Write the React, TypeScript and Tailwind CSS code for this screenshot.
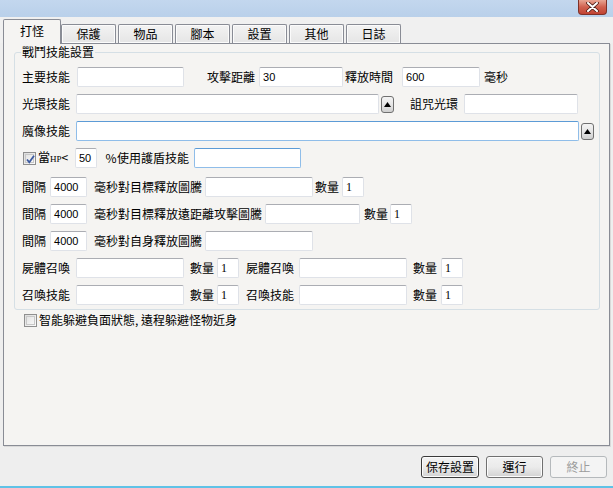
import React from 'react';
import clsx from 'clsx';

interface TextBoxProps {
  className?: string;
  value?: string;
  focus?: boolean;
  serif?: boolean;
}

const TextBox: React.FC<TextBoxProps> = ({ className, value, focus, serif }) => (
  <div
    className={clsx(
      'h-[20px] shrink-0 bg-white border rounded-[2px] flex items-center px-[3px] text-black',
      focus ? 'border-[#8fbde9] border-t-[#5c9bd6]' : 'border-[#dfe2e8] border-t-[#abadb3]',
      serif ? "font-['Liberation_Serif',serif] text-[12px]" : "font-['Liberation_Sans',sans-serif] text-[11px]",
      className
    )}
  >
    {value}
  </div>
);

const Label: React.FC<{ className?: string; children: React.ReactNode }> = ({ className, children }) => (
  <span className={clsx('text-[12px] leading-[20px] whitespace-nowrap shrink-0', className)}>{children}</span>
);

const ArrowButton: React.FC<{ className?: string }> = ({ className }) => (
  <div
    className={clsx(
      'w-[13px] h-[17px] shrink-0 rounded-[3px] border border-[#707070] bg-gradient-to-b from-[#f4f4f4] via-[#e6e6e6] to-[#cfcfcf] flex items-center justify-center',
      className
    )}
  >
    <svg width="7" height="5" viewBox="0 0 7 5">
      <path d="M3.5 0 L7 5 L0 5 Z" fill="#000" />
    </svg>
  </div>
);

const CheckBox: React.FC<{ checked?: boolean; className?: string }> = ({ checked, className }) => (
  <div
    className={clsx(
      'w-[13px] h-[13px] shrink-0 border border-[#8f8f8f] bg-gradient-to-br from-[#dcdcdc] to-[#fbfbfb] p-[1px]',
      className
    )}
  >
    <div className="w-full h-full border border-[#c8c8c8] bg-gradient-to-br from-[#e4e4e4] to-[#f7f7f7] relative">
      {checked && (
        <svg className="absolute -left-[1px] -top-[1px]" width="11" height="11" viewBox="0 0 11 11">
          <path d="M2 5.5 L4.3 8.3 L9 1.8" stroke="#3c5aa0" strokeWidth="1.8" fill="none" />
        </svg>
      )}
    </div>
  </div>
);

const tabs = ['打怪', '保護', '物品', '腳本', '設置', '其他', '日誌'];

export default function App() {
  return (
    <div className="w-[613px] h-[488px] bg-[#eeeeee] flex flex-col overflow-hidden text-black font-['Noto_Sans_CJK_TC','Liberation_Sans',sans-serif]">
      {/* title bar */}
      <div className="h-[17px] shrink-0 bg-gradient-to-b from-[#c3d7ee] to-[#b9d0ea] flex justify-end pr-[6px]">
        <div className="w-[29px] h-[15px] rounded-b-[4px] border border-t-0 border-[#7e3128] bg-gradient-to-b from-[#e7a493] via-[#d0604f] to-[#c14332] flex items-center justify-center">
          <svg width="13" height="10" viewBox="0 0 13 10">
            <path d="M2 1 L11 9 M11 1 L2 9" stroke="#4a1a14" strokeWidth="3.6" strokeLinecap="round" />
            <path d="M2 1 L11 9 M11 1 L2 9" stroke="#ffffff" strokeWidth="2" strokeLinecap="round" />
          </svg>
        </div>
      </div>

      {/* tabs */}
      <div className="h-[26px] shrink-0 flex items-end pl-[3px] bg-[#f0f0f0]">
        {tabs.map((t, i) =>
          i === 0 ? (
            <div
              key={t}
              className="relative z-10 w-[58px] h-[25px] -mb-[1px] border border-b-0 border-[#898c95] rounded-t-[2px] bg-[#f5f4f2] flex items-center justify-center text-[12px] pb-[2px]"
            >
              {t}
            </div>
          ) : (
            <div
              key={t}
              className={clsx(
                'w-[55px] h-[19px] border border-b-0 border-[#898c95] rounded-t-[2px] bg-gradient-to-b from-[#f3f3f3] to-[#e5e5e5] flex items-center justify-center text-[12px] shadow-[inset_0_0_0_1px_#fbfbfb]',
                i > 1 && 'ml-[2px]'
              )}
            >
              {t}
            </div>
          )
        )}
      </div>

      {/* panel */}
      <div className="ml-[3px] w-[607px] h-[403px] shrink-0 border border-[#898c95] bg-[#f5f4f2] shadow-[1px_1px_0_#d9d9d9] flex flex-col">
        <div className="relative ml-[10px] mt-[8px] w-[586px] border border-[#d5dfe5] rounded-[3px] pl-[7px] pt-[14px] pb-[4px] flex flex-col gap-[7px]">
          <span className="absolute left-[6px] -top-[7px] px-[1px] h-[12px] leading-[12px] text-[12px] bg-[#f5f4f2]">
            戰鬥技能設置
          </span>

          <div className="flex items-center h-[20px]">
            <Label>主要技能</Label>
            <TextBox className="ml-[7px] w-[107px]" />
            <Label className="ml-[23px]">攻擊距離</Label>
            <TextBox className="ml-[4px] w-[84px]" value="30" />
            <Label className="ml-[2px]">釋放時間</Label>
            <TextBox className="ml-[9px] w-[78px]" value="600" />
            <Label className="ml-[4px]">毫秒</Label>
          </div>

          <div className="flex items-center h-[20px]">
            <Label>光環技能</Label>
            <TextBox className="ml-[6px] w-[303px]" />
            <ArrowButton className="ml-[2px]" />
            <Label className="ml-[16px]">詛咒光環</Label>
            <TextBox className="ml-[6px] w-[114px]" />
          </div>

          <div className="flex items-center h-[20px]">
            <Label>魔像技能</Label>
            <TextBox className="ml-[6px] w-[503px]" focus />
            <ArrowButton className="ml-[2px]" />
          </div>

          <div className="flex items-center h-[20px]">
            <CheckBox checked className="ml-[1px]" />
            <Label className="ml-[2px] w-[37px]">
              當<span className="text-[9px] font-['Liberation_Serif',serif]">HP</span>&lt;
            </Label>
            <TextBox className="w-[22px]" value="50" />
            <Label className="ml-[8px] w-[12px] text-center">%</Label>
            <Label className="w-[77px]">使用護盾技能</Label>
            <TextBox className="w-[107px]" focus />
          </div>

          <div className="flex items-center h-[20px] mt-[2px]">
            <Label>間隔</Label>
            <TextBox className="ml-[4px] w-[37px]" value="4000" />
            <Label className="ml-[7px]">毫秒對目標釋放圖騰</Label>
            <TextBox className="ml-[3px] w-[108px]" />
            <Label className="ml-[2px]">數量</Label>
            <TextBox className="ml-[3px] w-[22px]" value="1" serif />
          </div>

          <div className="flex items-center h-[20px]">
            <Label>間隔</Label>
            <TextBox className="ml-[4px] w-[37px]" value="4000" />
            <Label className="ml-[7px]">毫秒對目標釋放遠距離攻擊圖騰</Label>
            <TextBox className="ml-[3px] w-[95px]" />
            <Label className="ml-[4px]">數量</Label>
            <TextBox className="ml-[2px] w-[22px]" value="1" serif />
          </div>

          <div className="flex items-center h-[20px]">
            <Label>間隔</Label>
            <TextBox className="ml-[4px] w-[37px]" value="4000" />
            <Label className="ml-[7px]">毫秒對自身釋放圖騰</Label>
            <TextBox className="ml-[3px] w-[108px]" />
          </div>

          {['屍體召喚', '召喚技能'].map((name) => (
            <div key={name} className="flex items-center h-[20px]">
              <Label>{name}</Label>
              <TextBox className="ml-[6px] w-[108px]" />
              <Label className="ml-[6px]">數量</Label>
              <TextBox className="ml-[3px] w-[22px]" value="1" serif />
              <Label className="ml-[7px]">{name}</Label>
              <TextBox className="ml-[5px] w-[108px]" />
              <Label className="ml-[6px]">數量</Label>
              <TextBox className="ml-[4px] w-[22px]" value="1" serif />
            </div>
          ))}
        </div>

        <div className="flex items-center h-[20px] ml-[20px]">
          <CheckBox />
          <Label className="ml-[2px]">智能躲避負面狀態, 遠程躲避怪物近身</Label>
        </div>
      </div>

      {/* footer buttons */}
      <div className="flex-1 flex justify-end items-start pt-[10px] pr-[6px] gap-[7px]">
        <button className="w-[58px] h-[22px] rounded-[3px] border border-[#3a3a3a] bg-gradient-to-b from-[#f2f2f2] via-[#ebebeb] to-[#d2d2d2] shadow-[inset_0_0_0_1px_#fcfcfc] text-[12px]">
          保存設置
        </button>
        <button className="w-[57px] h-[22px] rounded-[3px] border border-[#707070] bg-gradient-to-b from-[#f2f2f2] via-[#ebebeb] to-[#d2d2d2] shadow-[inset_0_0_0_1px_#fcfcfc] text-[12px]">
          運行
        </button>
        <button className="w-[57px] h-[22px] rounded-[3px] border border-[#b5b9bc] bg-[#f4f4f4] text-[12px] text-[#9c9c9c]">
          終止
        </button>
      </div>
      <div className="h-[2px] shrink-0 bg-[#5fc2e6]" />
    </div>
  );
}
